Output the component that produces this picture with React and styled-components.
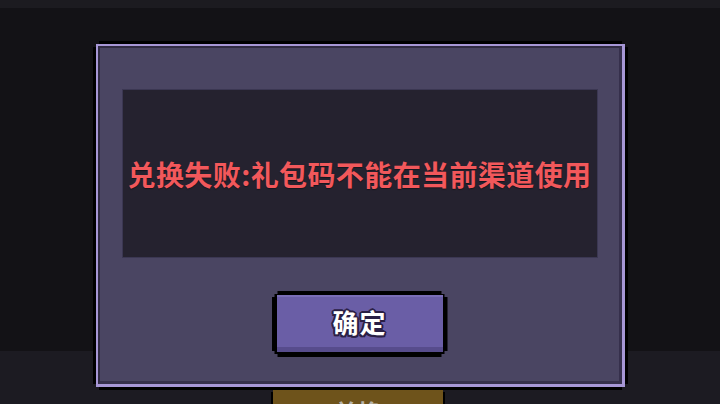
import React from "react";
import styled, { createGlobalStyle } from "styled-components";

const Global = createGlobalStyle`
  html, body { margin: 0; padding: 0; width: 720px; height: 404px; overflow: hidden; background: #131216; }
  #root { width: 720px; height: 404px; overflow: hidden; }
  * { box-sizing: border-box; }
`;

const notch = (n) =>
  `polygon(${n}px 0, calc(100% - ${n}px) 0, calc(100% - ${n}px) ${n / 2}px, calc(100% - ${n / 2}px) ${n / 2}px, calc(100% - ${n / 2}px) ${n}px, 100% ${n}px, 100% calc(100% - ${n}px), calc(100% - ${n / 2}px) calc(100% - ${n}px), calc(100% - ${n / 2}px) calc(100% - ${n / 2}px), calc(100% - ${n}px) calc(100% - ${n / 2}px), calc(100% - ${n}px) 100%, ${n}px 100%, ${n}px calc(100% - ${n / 2}px), ${n / 2}px calc(100% - ${n / 2}px), ${n / 2}px calc(100% - ${n}px), 0 calc(100% - ${n}px), 0 ${n}px, ${n / 2}px ${n}px, ${n / 2}px ${n / 2}px, ${n}px ${n / 2}px)`;

const Page = styled.div`
  position: relative;
  width: 720px;
  height: 404px;
  overflow: hidden;
  display: flex;
  flex-direction: column;
  font-family: "Noto Sans CJK SC", "Noto Sans", sans-serif;
`;

const TopBar = styled.div`
  height: 8px;
  background: #1c1b20;
`;

const Main = styled.div`
  flex: 1;
  background: #131216;
`;

const BottomBar = styled.div`
  height: 53px;
  background: #1c1b22;
  display: flex;
  justify-content: center;
  padding-top: 37px;
  overflow: hidden;
`;

const GoldButton = styled.div`
  width: 174px;
  height: 40px;
  margin-left: -4px;
  background: #000;
  padding: 2px;
  display: flex;
  clip-path: ${notch(4)};
`;

const GoldFace = styled.div`
  flex: 1;
  background: #6e531b;
  color: #b7b2a8;
  font-size: 24px;
  font-weight: 700;
  text-align: center;
  line-height: 28px;
  padding-top: 8px;
`;

const Overlay = styled.div`
  position: absolute;
  inset: 0;
  display: flex;
  justify-content: center;
  padding-top: 41px;
  padding-left: 1px;
`;

const DialogOuter = styled.div`
  width: 535px;
  height: 349px;
  background: #000;
  padding: 3px;
  display: flex;
  clip-path: ${notch(6)};
`;

const DialogFrame = styled.div`
  flex: 1;
  display: flex;
  border: 2px solid #a797d6;
  border-right-width: 3px;
  border-bottom-width: 3px;
  background: #4a4562;
`;

const DialogBody = styled.div`
  flex: 1;
  display: flex;
  flex-direction: column;
  align-items: center;
  border-top: 2px solid #302b42;
  border-left: 2px solid #302b42;
  border-right: 3px solid #36304c;
  border-bottom: 3px solid #36304c;
  padding-top: 41px;
`;

const Panel = styled.div`
  width: 476px;
  height: 169px;
  background: #25222f;
  border: 1.5px solid #3b3752;
  display: flex;
  align-items: center;
  justify-content: center;
`;

const Message = styled.div`
  color: #f2585b;
  font-size: 28px;
  font-weight: 700;
  letter-spacing: 0.4px;
  text-shadow: 0 1px 1px rgba(0, 0, 0, 0.4);
  white-space: nowrap;
`;

const ButtonOuter = styled.div`
  margin-top: 33px;
  width: 176px;
  height: 66px;
  background: #000;
  padding: 4px 5px 5px 5px;
  display: flex;
  clip-path: ${notch(6)};
`;

const ButtonFace = styled.button`
  flex: 1;
  border: none;
  margin: 0;
  padding: 0 0 4px 0;
  background: #6a5ea6;
  box-shadow: inset 0 -5px 0 #574c8c, inset 0 2px 0 #7a6eb6;
  color: #ffffff;
  font-family: "Noto Sans CJK SC", "Noto Sans", sans-serif;
  font-size: 26px;
  font-weight: 700;
  letter-spacing: 1px;
  text-shadow:
    2px 0 0 #2a1f45, -2px 0 0 #2a1f45, 0 2px 0 #2a1f45, 0 -2px 0 #2a1f45,
    1.5px 1.5px 0 #2a1f45, -1.5px 1.5px 0 #2a1f45, 1.5px -1.5px 0 #2a1f45, -1.5px -1.5px 0 #2a1f45;
  cursor: pointer;
`;

export default function App() {
  return (
    <>
      <Global />
      <Page>
        <TopBar />
        <Main />
        <BottomBar>
          <GoldButton>
            <GoldFace>兑换</GoldFace>
          </GoldButton>
        </BottomBar>
        <Overlay>
          <DialogOuter>
            <DialogFrame>
              <DialogBody>
                <Panel>
                  <Message>兑换失败:礼包码不能在当前渠道使用</Message>
                </Panel>
                <ButtonOuter>
                  <ButtonFace>确定</ButtonFace>
                </ButtonOuter>
              </DialogBody>
            </DialogFrame>
          </DialogOuter>
        </Overlay>
      </Page>
    </>
  );
}
